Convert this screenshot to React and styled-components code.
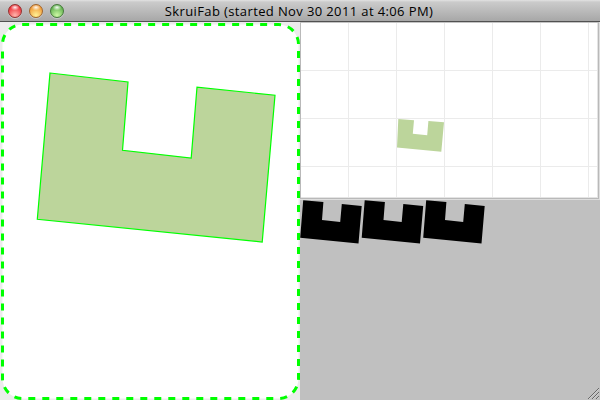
import React from 'react';
import styled, { createGlobalStyle } from 'styled-components';

const GlobalStyle = createGlobalStyle`
  * { box-sizing: border-box; }
  body { margin: 0; overflow: hidden; }
`;

const Window = styled.div`
  width: 600px;
  height: 400px;
  display: grid;
  grid-template-rows: 22px 378px;
  background: #ececec;
`;

const TitleBar = styled.header`
  display: grid;
  grid-template-columns: 69px 1fr 71px;
  align-items: center;
  background: linear-gradient(#e2e2e2 0, #cbcbcb 2px, #a7a7a7 21px);
  border-bottom: 1px solid #515151;
`;

const Controls = styled.div`
  display: flex;
  gap: 7px;
  padding-left: 8px;
`;

const ControlButton = styled.span`
  width: 14px;
  height: 14px;
  border-radius: 50%;
  border: 1px solid ${(p) => p.$rim};
  background:
    radial-gradient(ellipse 4.5px 3px at 50% 20%, #fffffff0 0, #ffffff00 100%),
    radial-gradient(circle at 50% 85%, ${(p) => p.$glow} 0, ${(p) => p.$tone} 75%);
  box-shadow: 0 1px 0 #ffffff55;
`;

const Title = styled.h1`
  margin: 0;
  font: 400 13px/20px 'Open Sans', 'Noto Sans', sans-serif;
  letter-spacing: 0.38px;
  text-align: center;
  white-space: nowrap;
  color: #000;
`;

const Body = styled.main`
  display: grid;
  grid-template-columns: 300px 300px;
`;

const Drawing = styled.svg`
  display: block;
`;

const SidePanel = styled.div`
  display: grid;
  grid-template-rows: 178px 200px;
`;

const Preview = styled.section`
  display: grid;
  border-right: 1px solid #dedede;
  border-bottom: 1px solid #dedede;
`;

const PreviewFrame = styled.div`
  border: 1px solid #b9b9b9;
  border-top-color: #c4c4c4;
  background: #fff;
`;

const PreviewSheet = styled.div`
  width: 297px;
  height: 175px;
  border-right: 1px solid #e4e4e4;
  border-bottom: 1px solid #e4e4e4;
`;

const Tray = styled.section`
  display: grid;
  grid-template-rows: 1fr 12px;
  background: #c0c0c0;
`;

const Grip = styled(Drawing)`
  justify-self: end;
`;

const buttons = [
  { rim: '#93312f', tone: '#ee3038', glow: '#ffb5ac' },
  { rim: '#a0652c', tone: '#f09a38', glow: '#fff195' },
  { rim: '#46793b', tone: '#5fb04e', glow: '#cdf8a4' },
];

const gridX = [47.5, 95.5, 143.5, 191.5, 239.5, 287.5];
const gridY = [47.5, 95.5, 143.5];

export default function App() {
  return (
    <>
      <GlobalStyle />
      <Window>
        <TitleBar>
          <Controls>
            {buttons.map((b) => (
              <ControlButton key={b.rim} $rim={b.rim} $tone={b.tone} $glow={b.glow} />
            ))}
          </Controls>
          <Title>SkruiFab (started Nov 30 2011 at 4:06 PM)</Title>
        </TitleBar>
        <Body>
          <Drawing width="300" height="378" viewBox="0 22 300 378">
            <path
              d="M2.5 44.5V378.5A20 20 0 0 0 22.5 398.5H278.5A20 20 0 0 0 298.5 378.5V44.5A20 20 0 0 0 278.5 24.5H22.5A20 20 0 0 0 2.5 44.5"
              fill="#fff"
              stroke="#00ff00"
              strokeWidth="3"
              strokeDasharray="7 7"
              strokeDashoffset="7"
            />
            <path
              d="M50 73L128 82L122.5 150.3L191.2 158L197 87.2L275 95.2L262.2 242L37.3 219.3Z"
              fill="#bcd59b"
              stroke="#00ff00"
              strokeWidth="1.2"
            />
          </Drawing>
          <SidePanel>
            <Preview>
              <PreviewFrame>
                <PreviewSheet>
                  <Drawing width="296" height="174" viewBox="0 0 296 174">
                    {gridX.map((x) => (
                      <path key={x} d={`M${x} 0V174`} stroke="#ebebeb" />
                    ))}
                    {gridY.map((y) => (
                      <path key={y} d={`M0 ${y}H296`} stroke="#ebebeb" />
                    ))}
                    <path
                      transform="translate(-301 -23)"
                      d="M398.3 119L414 120.2L412.8 133.8L427.2 135.2L428.4 121L444 122.3L441.3 151.8L397 147.5Z"
                      fill="#bcd59b"
                    />
                  </Drawing>
                </PreviewSheet>
              </PreviewFrame>
            </Preview>
            <Tray>
              <Drawing width="300" height="188" viewBox="300 200 300 188">
                {[0, 61.5, 123].map((x) => (
                  <path
                    key={x}
                    transform={`translate(${x} 0)`}
                    d="M303.2 200.2L323.4 202L322 220L340.2 222L341.8 204L361.7 206L358.5 243.5L300.2 237.7Z"
                  />
                ))}
              </Drawing>
              <Grip width="12" height="12" viewBox="0 0 12 12">
                <path d="M0 11L11 0M4 11L11 4M8 11L11 8" stroke="#686868" />
                <path d="M1 11L11 1M5 11L11 5M9 11L11 9" stroke="#e2e2e2" strokeWidth="0.5" />
              </Grip>
            </Tray>
          </SidePanel>
        </Body>
      </Window>
    </>
  );
}
